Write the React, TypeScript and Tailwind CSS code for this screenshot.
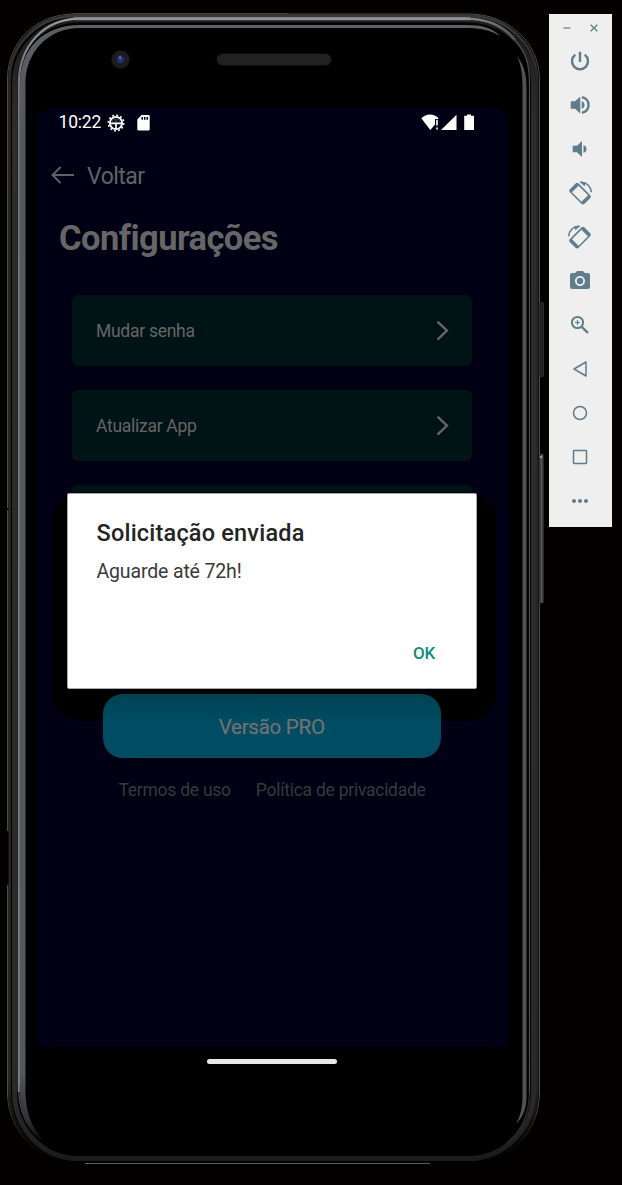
import React from "react";
import { MdPhotoCamera, MdMoreHoriz } from "react-icons/md";

function DeviceSkin() {
  return (
    <svg
      className="absolute inset-0"
      width="548"
      height="1185"
      viewBox="0 0 548 1185"
      fill="none"
      aria-hidden="true"
    >
      <defs>
        <linearGradient id="edge" x1="0" y1="13" x2="0" y2="1163" gradientUnits="userSpaceOnUse">
          <stop offset="0" stopColor="#4a4a4a" />
          <stop offset="0.94" stopColor="#4e4e4e" />
          <stop offset="0.97" stopColor="#2c2c2c" />
          <stop offset="1" stopColor="#000000" />
        </linearGradient>
        <linearGradient id="shell" x1="0" y1="13" x2="0" y2="1163" gradientUnits="userSpaceOnUse">
          <stop offset="0" stopColor="#3a3a3a" />
          <stop offset="0.06" stopColor="#262626" />
          <stop offset="0.93" stopColor="#262626" />
          <stop offset="0.98" stopColor="#080808" />
          <stop offset="1" stopColor="#000000" />
        </linearGradient>
        <linearGradient id="band" x1="0" y1="13" x2="0" y2="1163" gradientUnits="userSpaceOnUse">
          <stop offset="0" stopColor="#1c1c1c" />
          <stop offset="0.1" stopColor="#2c2c2c" />
          <stop offset="0.95" stopColor="#292929" />
          <stop offset="1" stopColor="#1a1a1a" />
        </linearGradient>
        <linearGradient id="rim" x1="0" y1="13" x2="0" y2="1163" gradientUnits="userSpaceOnUse">
          <stop offset="0" stopColor="#a4a9aa" />
          <stop offset="0.012" stopColor="#8d9293" />
          <stop offset="0.05" stopColor="#70787a" />
          <stop offset="0.93" stopColor="#7a8284" />
          <stop offset="0.965" stopColor="#3a3c3e" />
          <stop offset="0.985" stopColor="#000000" />
        </linearGradient>
        <linearGradient id="rimRight" x1="460" y1="0" x2="530" y2="0" gradientUnits="userSpaceOnUse">
          <stop offset="0" stopColor="#8d9293" />
          <stop offset="0.5" stopColor="#6d7172" />
          <stop offset="1" stopColor="#3c3c3c" />
        </linearGradient>
        <linearGradient id="inner" x1="0" y1="13" x2="0" y2="1163" gradientUnits="userSpaceOnUse">
          <stop offset="0" stopColor="#605f66" />
          <stop offset="0.1" stopColor="#55575e" />
          <stop offset="0.92" stopColor="#55575e" />
          <stop offset="0.96" stopColor="#33343a" />
          <stop offset="0.985" stopColor="#08080a" />
        </linearGradient>
        <linearGradient id="button" x1="539" y1="0" x2="544" y2="0" gradientUnits="userSpaceOnUse">
          <stop offset="0" stopColor="#1c1c1c" />
          <stop offset="0.5" stopColor="#555555" />
          <stop offset="1" stopColor="#252525" />
        </linearGradient>
        <pattern id="mesh" width="2" height="2" patternUnits="userSpaceOnUse">
          <rect width="2" height="2" fill="#191b1b" />
          <rect width="1" height="1" fill="#292c2c" />
          <rect x="1" y="1" width="1" height="1" fill="#252828" />
        </pattern>
        <radialGradient id="lens" cx="0.5" cy="0.5" r="0.5">
          <stop offset="0" stopColor="#34427c" />
          <stop offset="0.4" stopColor="#1c2450" />
          <stop offset="0.55" stopColor="#14161f" />
          <stop offset="0.62" stopColor="#1f1f1f" />
          <stop offset="0.9" stopColor="#191919" />
          <stop offset="1" stopColor="#060606" />
        </radialGradient>
      </defs>
      <path
        d="M7.500 1092V79C7.500 42 36 14 74 14H469C508 14 539.500 42 539.500 80V1092C539.500 1134 508 1162.500 468 1162.500H78C38 1162.500 7.500 1132 7.500 1092Z"
        fill="#000000"
        stroke="url(#edge)"
      />
      <path
        d="M9.500 1092V80C9.500 44 38 16 75 16H469C506 16 537 44 537 81V1092C537 1132 506 1161 468 1161H78C39 1161 9.500 1131 9.500 1092Z"
        stroke="url(#shell)"
        strokeWidth="3"
      />
      <path
        d="M14.500 1092V84C14.500 46 44 20 80 20H466C503 20 533.500 46 533.500 84V1092C533.500 1128 505 1158.500 468 1158.500H78C42 1158.500 14.500 1128 14.500 1092Z"
        stroke="url(#band)"
        strokeWidth="5"
      />
      <path
        d="M18.800 1092V84C18.800 46 44 18.700 80 18.700H466"
        stroke="url(#rim)"
        strokeWidth="2.200"
      />
      <path d="M18.800 1092C19.500 1113 28 1130 43 1142" stroke="url(#rim)" strokeWidth="1" />
      <path d="M74 18.700H470" stroke="#8d9293" strokeWidth="3" />
      <path d="M466 18.700C488 18.700 504 26 515 40" stroke="url(#rimRight)" strokeWidth="2.600" />
      <path d="M515 40C526 52 529.500 64 529.500 84V1092" stroke="#4c4c4c" strokeWidth="1.200" />
      <path d="M529.500 1092C529.500 1112 522 1131 508 1142" stroke="#303030" strokeWidth="1.200" />
      <path
        d="M20 1092V84C20 48 44 25 80 25H466C482 25 493 28 500 36C490 30 480 28 466 28H80C49 28 25.500 51 25.500 84V1092C26 1112 31 1127 43 1140C29 1130 20 1115 20 1092Z"
        fill="url(#inner)"
      />
      <path
        d="M517 56C524 65 526.500 74 526.500 88V1096C526.500 1109 523 1117 516 1124C520.500 1115 522.500 1108 522.500 1096V88C522.500 74 521 65 517 56Z"
        fill="#515156"
      />
      <path d="M73 13.500H288" stroke="#464646" />
      <path d="M85 1163.500H430" stroke="#5d5f5f" />
      <rect x="539.500" y="302.500" width="4" height="74" rx="1" fill="#202020" stroke="#333333" strokeWidth="0.800" />
      <rect x="539.500" y="454" width="4" height="149" rx="1" fill="url(#button)" stroke="#303030" strokeWidth="0.600" />
      <circle cx="541" cy="457" r="1.300" fill="#a0a0a0" />
      <rect x="6.500" y="508" width="2" height="2" fill="#000000" />
      <rect x="6.500" y="831" width="2" height="54" fill="#000000" />
      <circle cx="120.500" cy="59.500" r="9.500" fill="url(#lens)" />
      <circle cx="120" cy="57.500" r="1.200" fill="#6674ac" />
      <rect x="217" y="54" width="114" height="11" rx="5.500" fill="url(#mesh)" stroke="#1e2020" strokeWidth="0.800" />
    </svg>
  );
}

function StatusBar() {
  return (
    <div className="flex h-[29px] items-center pl-[21.500px] pr-[33px] text-white">
      <span className="w-[42.500px] pt-px whitespace-nowrap text-[17.500px] leading-none tracking-[-0.200px]">10:22</span>
      <svg className="ml-[6px] shrink-0" width="18" height="18" viewBox="0 0 18 18" fill="none" aria-hidden="true">
        <circle cx="9" cy="9" r="7.700" stroke="#fff" strokeWidth="1.600" strokeDasharray="1.900 2.132" />
        <circle cx="9" cy="9" r="6.100" stroke="#fff" strokeWidth="1.900" />
        <path d="M3.500 9.300H14.500M9 9.500V15" stroke="#fff" strokeWidth="1.700" />
        <path d="M4.700 8.600A4.300 4.300 0 0 1 13.300 8.600Z" fill="#fff" fillOpacity="0.200" />
        <circle cx="7" cy="6.900" r="0.900" fill="#000014" />
        <circle cx="11" cy="6.900" r="0.900" fill="#000014" />
      </svg>
      <svg className="ml-[11.500px] shrink-0" width="13" height="16" viewBox="0 0 13 16" aria-hidden="true">
        <path d="M4.500 0H11.500C12.200 0 12.700 .5 12.700 1.200V14.200C12.700 14.900 12.200 15.400 11.500 15.400H1.500C.8 15.400 .3 14.900 .3 14.200V4.500Z" fill="#fff" />
        <path d="M4.500 2H6V4.800H4.500ZM7 2H8.500V4.800H7ZM9.500 2H11V4.800H9.500Z" fill="#000014" />
      </svg>
      <svg className="ml-auto shrink-0" width="54" height="18" viewBox="0 0 54 18" fill="#fff" aria-hidden="true">
        <path d="M.3 4.200C5 -.9 13 -.9 17.700 4.200L17 5H14V10.500L9.300 16Z" />
        <path d="M15.200 5.700H16.800V11.500H15.200ZM15.200 13.500H16.800V15.500H15.200Z" />
        <path d="M35.500 .8V16H20Z" />
        <path d="M43.200 1.800H46V.5H50V1.800H53V16H43.200Z" />
      </svg>
    </div>
  );
}

function SettingsRow({ label }: { label?: string }) {
  return (
    <div className="flex h-[71px] w-[400px] shrink-0 items-center justify-between rounded-md bg-[#001315] pl-6 pr-[23px]">
      {label && (
        <>
          <span className="pt-[3px] text-[17.500px] leading-none tracking-[-0.280px] text-[#666668]">{label}</span>
          <svg width="13" height="20" viewBox="0 0 13 20" fill="none" aria-hidden="true">
            <path d="M1.500 .6L11 9.600L1.500 18.600" stroke="#666666" strokeWidth="2.300" />
          </svg>
        </>
      )}
    </div>
  );
}

function AppScreen() {
  return (
    <main className="relative flex h-[939px] w-[471px] flex-col overflow-hidden rounded-t-[15px] bg-[#000014]">
      <StatusBar />
      <div className="mt-[22px] flex h-8 items-center pl-[14px] text-[#626264]">
        <svg width="24" height="18" viewBox="0 0 24 18" fill="none" aria-hidden="true">
          <path d="M9.500 1L1.500 9L9.500 17M1.500 9H23" stroke="currentColor" strokeWidth="1.900" />
        </svg>
        <span className="ml-3 pt-0.5 text-[23px] leading-none tracking-[-0.500px]">Voltar</span>
      </div>
      <h1 className="mt-[25px] pl-[22px] text-[34.500px] leading-[44px] font-bold tracking-[-0.560px] text-[#666666]">
        Configurações
      </h1>
      <div className="mt-[35px] flex flex-col gap-6 pl-[35px]">
        <SettingsRow label="Mudar senha" />
        <SettingsRow label="Atualizar App" />
        <SettingsRow />
      </div>
      <div className="absolute top-[385px] left-[15px] h-[228px] w-[444px] rounded-[28px] bg-black" />
      <div className="relative mt-[138px] ml-[65.500px] flex h-16 w-[338.500px] shrink-0 items-center justify-center rounded-[20px] bg-linear-to-b from-[#004253] to-[#004c62] to-45% pt-0.5 text-[20.500px] tracking-[-0.250px] text-[#727274] [-webkit-text-stroke:0.200px_#727274]">
        Versão PRO
      </div>
      <div className="mt-[20px] flex gap-[25px] pl-[81.500px] text-[17.500px] leading-6 tracking-[-0.260px] whitespace-nowrap text-[#39393b]">
        <span>Termos de uso</span>
        <span>Política de privacidade</span>
      </div>
    </main>
  );
}

function ConfirmationDialog() {
  return (
    <section
      role="dialog"
      className="absolute top-[493px] left-[67px] flex h-[196px] w-[410px] flex-col rounded-[2px] border border-[#a9a9ae] bg-white px-[28.500px] shadow-[0_1px_0_2px_#000000]"
    >
      <h2 className="mt-[24px] text-[23.500px] leading-[30px] font-medium tracking-[0.200px] text-[#242424]">Solicitação enviada</h2>
      <p className="mt-[12px] text-[19.500px] leading-[24px] tracking-[-0.150px] text-[#3a3a3a]">Aguarde até 72h!</p>
      <button className="mt-auto mr-[12.500px] mb-[23px] self-end text-[17px] leading-6 font-medium tracking-[-0.200px] text-[#13897b]">OK</button>
    </section>
  );
}

function VolumeIcon({ loud }: { loud?: boolean }) {
  return (
    <svg width="24" height="24" viewBox="0 0 24 24" fill="currentColor" aria-hidden="true">
      {loud ? (
        <>
          <path d="M2.700 8.300H7L12.300 3.500V20.500L7 15.700H2.700Z" />
          <path d="M13.700 8C17.500 9.300 17.500 14.700 13.700 16Z" />
          <path d="M14 4.200C22.700 6.400 22.700 17.600 14 19.800" fill="none" stroke="currentColor" strokeWidth="2.400" />
        </>
      ) : (
        <>
          <path d="M4.700 8.700H9L14 4V20L9 15.300H4.700Z" />
          <path d="M15.500 8C19.500 9.300 19.500 14.700 15.500 16Z" />
        </>
      )}
    </svg>
  );
}

function RotateIcon({ right }: { right?: boolean }) {
  return (
    <svg
      className={right ? "-scale-x-100" : ""}
      width="24"
      height="24"
      viewBox="0 0 24 24"
      fill="none"
      stroke="currentColor"
      aria-hidden="true"
    >
      <g transform="rotate(-45 12 12.700)">
        <rect x="6.600" y="3.200" width="10.800" height="19" rx="1.400" strokeWidth="1.600" />
        <path d="M7 4.500H17M7 20.900H17" strokeWidth="3" />
      </g>
      <path d="M12.500 1.300C18.500 .8 23 5.500 23.300 11.300" strokeWidth="1.500" />
      <path d="M12 1L16.500 4.800L17.500 2Z" fill="currentColor" strokeWidth="0.600" />
    </svg>
  );
}

function OutlineIcon({ weight, children }: { weight: number; children: React.ReactNode }) {
  return (
    <svg
      width="24"
      height="24"
      viewBox="0 0 24 24"
      fill="none"
      stroke="currentColor"
      strokeWidth={weight}
      aria-hidden="true"
    >
      {children}
    </svg>
  );
}

function EmulatorToolbar() {
  const icons = [
    <OutlineIcon weight={2.4}>
      <path d="M12 2.700V13M7.300 5.800A8 8 0 1 0 16.700 5.800" />
    </OutlineIcon>,
    <VolumeIcon loud />,
    <VolumeIcon />,
    <RotateIcon />,
    <RotateIcon right />,
    <MdPhotoCamera size={24} />,
    <OutlineIcon weight={2}>
      <circle cx="9.500" cy="9.500" r="5.600" />
      <path d="M13.800 13.800L20 20" strokeWidth="2.400" />
      <path d="M9.500 7V12M7 9.500H12" strokeWidth="1.200" />
    </OutlineIcon>,
    <OutlineIcon weight={1.5}>
      <path d="M18 5V19L6 12Z" strokeLinejoin="round" />
    </OutlineIcon>,
    <OutlineIcon weight={1.5}>
      <circle cx="12" cy="12" r="6.500" />
    </OutlineIcon>,
    <OutlineIcon weight={1.5}>
      <rect x="5.500" y="5.500" width="13" height="13" rx="0.600" />
    </OutlineIcon>,
    <MdMoreHoriz size={24} />,
  ];
  return (
    <aside className="mt-[14px] flex h-[513px] w-[63px] flex-col items-center bg-[#efefef] pr-px text-[#607d8b]">
      <div className="flex h-[25px] w-full items-center gap-[19px] pt-[3px] pl-[14px]">
        <svg width="8" height="8" viewBox="0 0 8 8" stroke="currentColor" aria-hidden="true">
          <path d="M.5 4H7.500" strokeWidth="1.200" />
        </svg>
        <svg width="8" height="8" viewBox="0 0 8 8" stroke="currentColor" aria-hidden="true">
          <path d="M.7 .7L7.300 7.300M7.300 .7L.7 7.300" strokeWidth="1.300" />
        </svg>
      </div>
      {icons.map((icon, i) => (
        <div key={i} className="flex h-11 w-11 shrink-0 items-center justify-center">
          {icon}
        </div>
      ))}
    </aside>
  );
}

export default function App() {
  return (
    <div className="flex h-[1185px] w-[622px] overflow-hidden bg-[#020100] font-['Roboto',sans-serif]">
      <div className="relative w-[549px] shrink-0">
        <DeviceSkin />
        <div className="relative flex flex-col pt-[108px] pl-[37px]">
          <AppScreen />
          <div className="mt-[12px] ml-[170px] h-[4.500px] w-[130px] rounded-full bg-[#e8e8e8]" />
        </div>
        <ConfirmationDialog />
      </div>
      <EmulatorToolbar />
    </div>
  );
}
